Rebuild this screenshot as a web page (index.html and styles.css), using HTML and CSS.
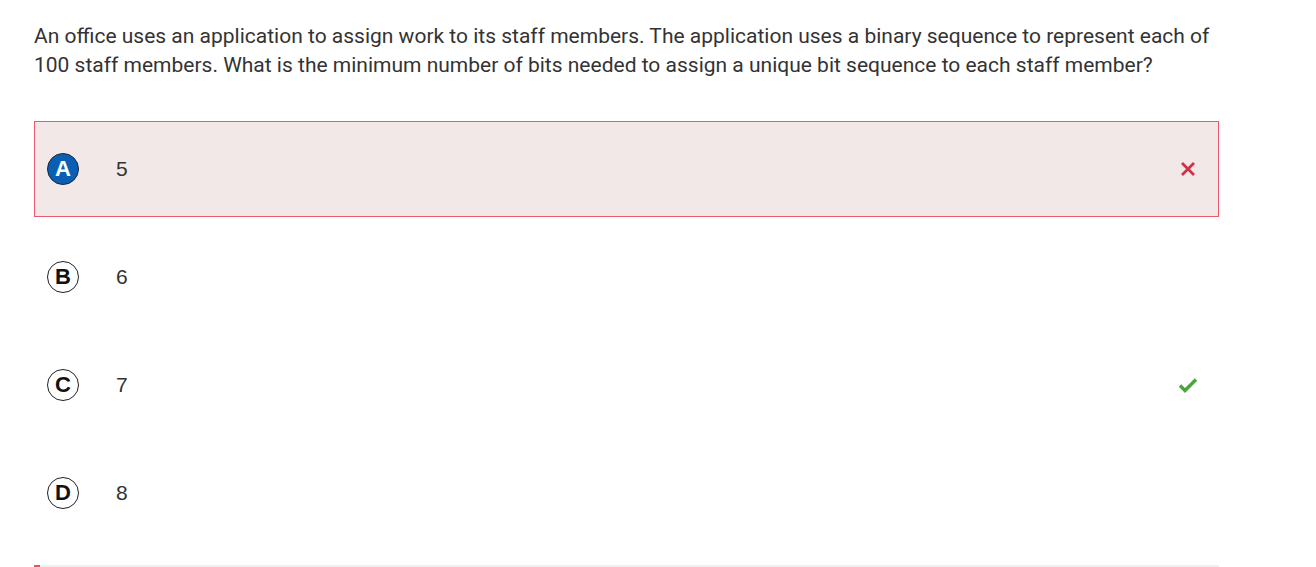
FILE: index.html
```html
<!DOCTYPE html>
<html>
<head>
<meta charset="utf-8">
<link rel="stylesheet" href="styles.css">
</head>
<body>
<div class="page">
  <p class="question">An office uses an application to assign work to its staff members. The application uses a binary sequence to represent each of 100 staff members. What is the minimum number of bits needed to assign a unique bit sequence to each staff member?</p>
  <div class="options">
    <div class="option wrong">
      <span class="letter selected">A</span>
      <span class="value">5</span>
      <span class="mark">
        <svg width="16" height="16" viewBox="0 0 16 16"><path d="M2 2 L14 14 M14 2 L2 14" stroke="#d0314a" stroke-width="2.8" fill="none"/></svg>
      </span>
    </div>
    <div class="option">
      <span class="letter">B</span>
      <span class="value">6</span>
    </div>
    <div class="option">
      <span class="letter">C</span>
      <span class="value">7</span>
      <span class="mark">
        <svg width="20" height="16" viewBox="0 0 20 16"><path d="M2 8.5 L7 13.5 L18 2.5" stroke="#4ca43c" stroke-width="3.4" fill="none"/></svg>
      </span>
    </div>
    <div class="option">
      <span class="letter">D</span>
      <span class="value">8</span>
    </div>
  </div>
  <div class="progress"><div class="progress-fill"></div></div>
</div>
</body>
</html>
```
FILE: styles.css
```css
html, body {
  margin: 0;
  padding: 0;
  background: #fff;
}
.page {
  width: 1185px;
  margin-left: 34px;
  padding-top: 22px;
}
.question {
  margin: 0;
  font-family: Roboto, "Liberation Sans", sans-serif;
  font-size: 21px;
  line-height: 29px;
  color: #333;
}
.options {
  margin-top: 41px;
  display: flex;
  flex-direction: column;
  gap: 12px;
}
.option {
  height: 96px;
  box-sizing: border-box;
  border: 1px solid transparent;
  display: flex;
  align-items: center;
  padding-left: 12px;
  font-family: "Liberation Sans", Arial, sans-serif;
}
.option.wrong {
  background: #f3e8e8;
  border-color: #ea5a6c;
}
.letter {
  width: 32px;
  height: 32px;
  box-sizing: border-box;
  border: 1px solid #222;
  border-radius: 50%;
  display: flex;
  align-items: center;
  justify-content: center;
  font-weight: bold;
  font-size: 22px;
  color: #111;
  background: #fff;
}
.letter.selected {
  background: #0a5fb4;
  color: #fff;
  border-color: #1a2a3a;
}
.value {
  margin-left: 37px;
  font-size: 21px;
  color: #333;
  flex: 1;
}
.mark {
  width: 20px;
  display: flex;
  justify-content: center;
  margin-right: 20px;
}
.progress {
  margin-top: 24px;
  height: 2px;
  background: #f0f0f0;
}
.progress-fill {
  width: 6px;
  height: 2px;
  background: #e25468;
}
```
